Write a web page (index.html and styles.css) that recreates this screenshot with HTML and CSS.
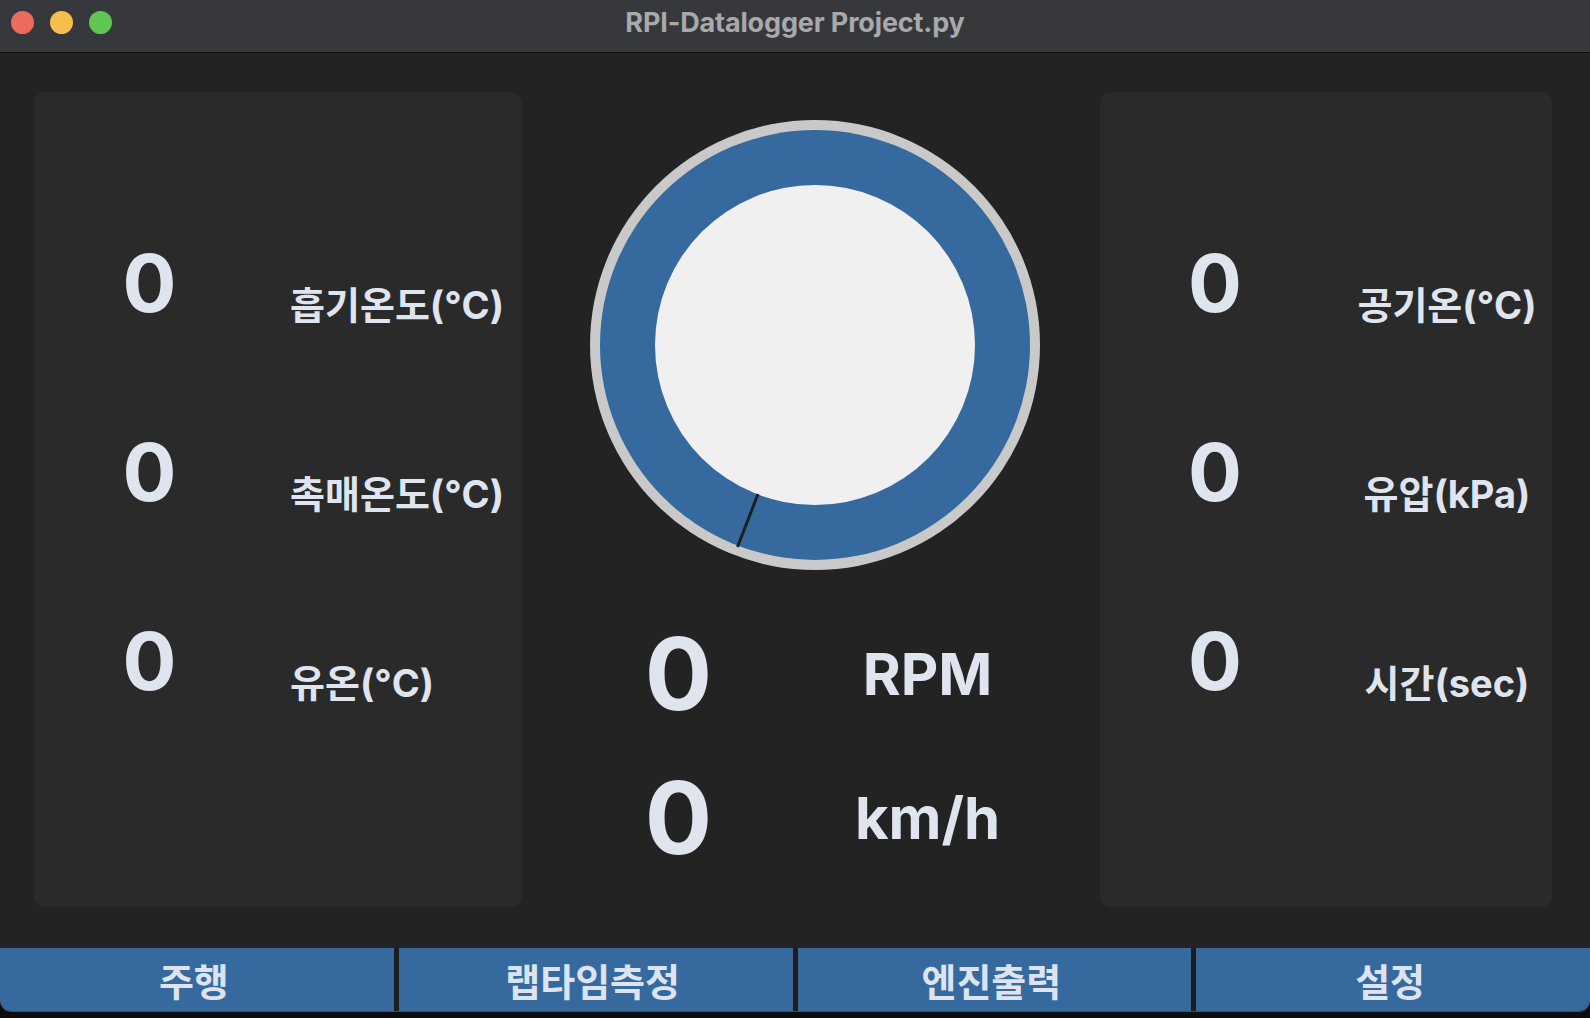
FILE: index.html
```html
<!DOCTYPE html>
<html lang="ko">
<head>
<meta charset="utf-8">
<title>RPI-Datalogger Project.py</title>
<link rel="stylesheet" href="styles.css">
</head>
<body>
<div class="window">
  <header class="titlebar">
    <div class="lights">
      <span class="light red"></span>
      <span class="light yellow"></span>
      <span class="light green"></span>
    </div>
    <div class="title">RPI-Datalogger Project.py</div>
    <div class="spacer"></div>
  </header>

  <main class="main">
    <section class="panel panel-left">
      <div class="row"><div class="num">0</div><div class="label">흡기온도(°C)</div></div>
      <div class="row"><div class="num">0</div><div class="label">촉매온도(°C)</div></div>
      <div class="row"><div class="num">0</div><div class="label">유온(°C)</div></div>
    </section>

    <section class="center">
      <div class="gauge">
        <svg width="450" height="450" viewBox="0 0 450 450">
          <circle cx="225" cy="225" r="225" fill="#c9c9c9"/>
          <circle cx="225" cy="225" r="215" fill="#366a9f"/>
          <circle cx="225" cy="225" r="160" fill="#f0f0f0"/>
          <line x1="168" y1="374" x2="147.5" y2="427" stroke="#1f1f1f" stroke-width="3"/>
        </svg>
      </div>
      <div class="readouts">
        <div class="big-num">0</div><div class="unit">RPM</div>
        <div class="big-num">0</div><div class="unit">km/h</div>
      </div>
    </section>

    <section class="panel panel-right">
      <div class="row"><div class="num">0</div><div class="label">공기온(°C)</div></div>
      <div class="row"><div class="num">0</div><div class="label">유압(kPa)</div></div>
      <div class="row"><div class="num">0</div><div class="label">시간(sec)</div></div>
    </section>
  </main>

  <nav class="tabs">
    <div class="tab">주행</div>
    <div class="tab">랩타임측정</div>
    <div class="tab">엔진출력</div>
    <div class="tab">설정</div>
  </nav>
</div>
</body>
</html>
```

FILE: styles.css
```css
* { box-sizing: border-box; }

html, body {
  margin: 0;
  padding: 0;
}

body {
  width: 1590px;
  height: 1018px;
  overflow: hidden;
  background: #0d0d0e;
  font-family: "Inter", "Noto Sans CJK KR", sans-serif;
  color: #dfe4ee;
}

.window {
  height: 1011px;
  display: flex;
  flex-direction: column;
  background: #232323;
  border-radius: 0 0 11px 11px;
  overflow: hidden;
  box-shadow: 0 1px 0 #4a4b4e;
}

.titlebar {
  height: 53px;
  flex: none;
  display: grid;
  grid-template-columns: 1fr auto 1fr;
  align-items: center;
  padding-bottom: 8px;
  background: #37383b;
  border-bottom: 1px solid #0e0e0e;
}

.lights {
  display: flex;
  gap: 16px;
  padding-left: 11px;
}

.light {
  width: 23px;
  height: 23px;
  border-radius: 50%;
}
.red { background: #ee6a5f; }
.yellow { background: #f5bf4f; }
.green { background: #61c554; }

.title {
  font-weight: 700;
  font-size: 27px;
  letter-spacing: -0.15px;
  color: #a8a9ad;
}

.main {
  flex: 1;
  display: flex;
  padding: 39px 38px 41px 34px;
}

.panel {
  background: #2a2a2a;
  border-radius: 11px;
  padding-top: 96px;
}

.panel-left { width: 488px; }
.panel-right { width: 452px; }

.row {
  display: grid;
  height: 189px;
  align-items: center;
}

.panel-left .row {
  grid-template-columns: 231px 1fr;
  column-gap: 25px;
}

.panel-right .row {
  grid-template-columns: 230px 1fr;
}

.num {
  text-align: center;
  font-weight: 700;
  font-size: 80px;
  line-height: 1;
}

.label {
  font-weight: 700;
  font-size: 38px;
  line-height: 1.2;
  white-space: nowrap;
  margin-top: 46px;
}

.panel-right .label {
  text-align: center;
  padding-left: 12px;
}

.center {
  flex: 1;
  display: flex;
  flex-direction: column;
  align-items: center;
  padding-left: 8px;
  padding-top: 28px;
}

.gauge {
  width: 450px;
  height: 450px;
  flex: none;
}

.gauge svg { display: block; }

.readouts {
  align-self: flex-start;
  margin-left: 24px;
  margin-top: 32px;
  display: grid;
  grid-template-columns: 249px 249px;
  grid-auto-rows: 144px;
  align-items: center;
  justify-items: center;
}

.big-num {
  font-weight: 700;
  font-size: 100px;
  line-height: 1;
}

.unit {
  font-weight: 700;
  font-size: 58px;
  line-height: 1;
}

.tabs {
  height: 63px;
  flex: none;
  display: flex;
  gap: 5px;
  background: #1d1d1e;
}

.tab {
  flex: 1;
  display: flex;
  align-items: center;
  justify-content: center;
  padding-right: 6px;
  background: #366a9f;
  color: #dde3ef;
  font-weight: 700;
  font-size: 38px;
}
```
